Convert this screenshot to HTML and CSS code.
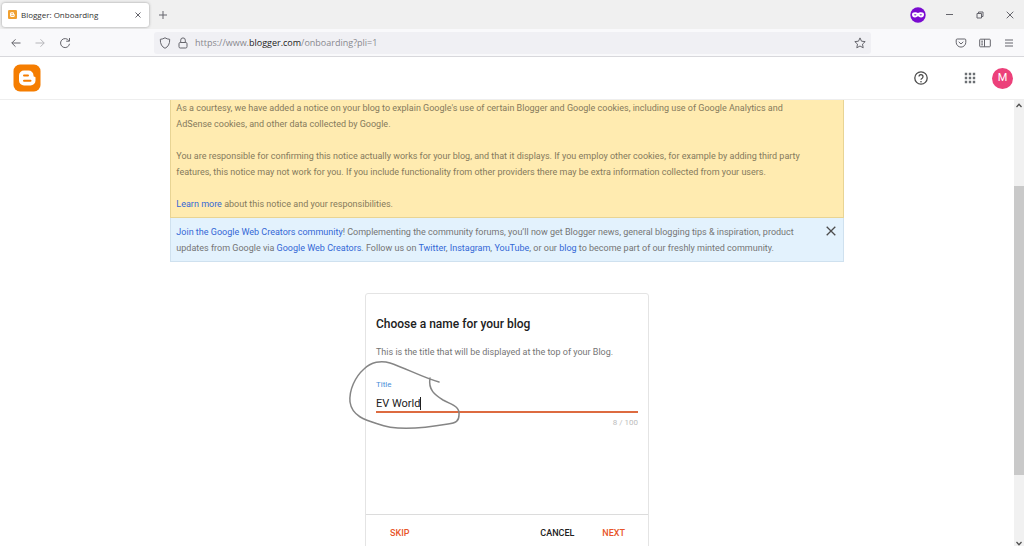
FILE: index.html
```
<!DOCTYPE html>
<html lang="en">
<head>
<meta charset="utf-8">
<title>Blogger: Onboarding</title>
<link rel="stylesheet" href="styles.css">
</head>
<body>
<div class="tabs">
  <div class="tab">
    <svg class="favicon" viewBox="0 0 24 24"><rect width="24" height="24" rx="3" fill="#f0a030"/><path d="M9 6h4a3 3 0 0 1 3 3v1q0 1 1 1t1 1v2.500a4 4 0 0 1-4 4H9.500a4 4 0 0 1-4-4v-5A3.500 3.500 0 0 1 9 6z" fill="#fff"/><path d="M9.500 9.800h3M9.500 14.500h5" stroke="#f0a030" stroke-width="2" stroke-linecap="round"/></svg>
    <span class="tab-title">Blogger: Onboarding</span>
    <button class="icon-btn" aria-label="Close tab"><svg width="6" height="6" viewBox="0 0 6 6"><path d="M.5.5l5 5M5.500.5l-5 5" class="line"/></svg></button>
  </div>
  <button class="icon-btn new-tab" aria-label="New tab"><svg width="8" height="8" viewBox="0 0 8 8"><path d="M4 0v8M0 4h8" class="line"/></svg></button>
  <div class="window-controls">
    <svg width="16" height="16" viewBox="0 0 16 16"><circle cx="8" cy="8" r="7.700" fill="#7a0bd0"/><path d="M5 5.300C6.500 5.300 7 6 8 6s1.500-.7 3-.7c2 0 3 .8 3 2.200 0 1.800-1.200 3-3 3-1.500 0-2-1.300-3-1.300s-1.500 1.300-3 1.300c-1.800 0-3-1.200-3-3 0-1.400 1-2.200 3-2.200z" fill="#fff"/><path d="M3.700 7.800q1.500-1.300 3 0-1.500 1.300-3 0zM9.300 7.800q1.500-1.300 3 0-1.500 1.300-3 0z" fill="#7a0bd0"/></svg>
    <button class="icon-btn" aria-label="Minimize"><svg width="8" height="8" viewBox="0 0 8 8"><path d="M0 3.500h7" class="line"/></svg></button>
    <button class="icon-btn" aria-label="Restore"><svg width="8" height="8" viewBox="0 0 8 8"><path d="M1 2.500h4.500V7H1zM2.500 2.300V1H7v4.500H5.700" class="line"/></svg></button>
    <button class="icon-btn" aria-label="Close window"><svg width="8" height="8" viewBox="0 0 8 8"><path d="M.7.7l6.600 6.600M7.300.7L.7 7.300" class="line"/></svg></button>
  </div>
</div>
<div class="toolbar">
  <div class="nav">
    <button class="icon-btn" aria-label="Back"><svg width="10" height="10" viewBox="0 0 10 10"><path d="M9.500 5H.8M4.500 1.300L.8 5l3.700 3.700" class="line"/></svg></button>
    <button class="icon-btn dim" aria-label="Forward"><svg width="10" height="10" viewBox="0 0 10 10"><path d="M.5 5h8.700M5.500 1.300L9.200 5 5.500 8.700" class="line"/></svg></button>
    <button class="icon-btn" aria-label="Reload"><svg width="12" height="12" viewBox="0 0 12 12"><path d="M9.800 3.600a4.500 4.500 0 1 0 .7 3.200M10.500 1v3.200H7.200" class="line"/></svg></button>
  </div>
  <div class="address">
    <svg width="12" height="12" viewBox="0 0 12 12"><path d="M6 .8c1.400.9 3 1.400 4.700 1.500C10.900 6.800 9 10 6 11.300 3 10 1.100 6.800 1.300 2.300 3 2.200 4.600 1.700 6 .8z" class="line"/></svg>
    <svg width="12" height="12" viewBox="0 0 12 12"><path d="M3.200 5.500h5.600q1.200 0 1.200 1.200v3q0 1.300-1.200 1.300H3.200Q2 11 2 9.700v-3q0-1.200 1.200-1.200zM3.700 5.500V3.200a2.300 2.300 0 0 1 4.600 0v2.300" class="line"/></svg>
    <span class="url">https://www.<b>blogger.com</b>/onboarding?pli=1</span>
    <button class="icon-btn" aria-label="Bookmark this page"><svg width="12" height="12" viewBox="0 0 12 12"><path d="M6 .9l1.500 3.300 3.700.4-2.700 2.500.7 3.700L6 9l-3.200 1.800.7-3.700L.8 4.600l3.700-.4z" class="line"/></svg></button>
  </div>
  <div class="tools">
    <button class="icon-btn" aria-label="Pocket"><svg width="12" height="12" viewBox="0 0 12 12"><path d="M2.200 2h7.600q1 0 1 1v2.300a4.800 4.800 0 0 1-9.600 0V3q0-1 1-1zM3.700 4.800L6 7l2.300-2.200" class="line"/></svg></button>
    <button class="icon-btn" aria-label="Sidebar"><svg width="12" height="12" viewBox="0 0 12 12"><path d="M1.500 2.200h9q.8 0 .8.800v6q0 .8-.8.800h-9Q.7 9.800.7 9V3q0-.8.800-.8zM5.500 2.200v7.600M2.200 4.200H4M2.200 6H4M2.200 7.800H4" class="line"/></svg></button>
    <button class="icon-btn" aria-label="Menu"><svg width="12" height="12" viewBox="0 0 12 12"><path d="M2 3h8M2 6h8M2 9h8" class="line"/></svg></button>
  </div>
</div>
<header class="app-bar">
  <a href="#" aria-label="Blogger home"><svg width="28" height="28" viewBox="0 0 28 28"><rect x=".5" y=".5" width="27" height="27" rx="6.500" fill="#f57d00"/><path d="M11 6.500h4.500a5 5 0 0 1 5 5c0 1 .4 1.300 1 1.300s1 .4 1 1v2.700a5 5 0 0 1-5 5H11a5 5 0 0 1-5-5v-5a5 5 0 0 1 5-5z" fill="#fff"/><path d="M11 11.500h4M11 16.800h6.500" stroke="#f57d00" stroke-width="2" stroke-linecap="round"/></svg></a>
  <div class="account">
    <button class="icon-btn" aria-label="Help"><svg width="14" height="14" viewBox="0 0 14 14"><circle cx="7" cy="7" r="6.200" class="bold-line"/><path d="M5 5.600a2 2 0 1 1 3.200 1.600Q7 7.900 7 8.800" class="bold-line"/><circle cx="7" cy="10.700" r=".8" fill="#444"/></svg></button>
    <button class="icon-btn apps" aria-label="Google apps"><svg width="12" height="12" viewBox="0 0 12 12"><path d="M.8.8h2.400v2.400H.8zM4.800.8h2.400v2.400H4.800zM8.800.8h2.400v2.400H8.800zM.8 4.800h2.400v2.400H.8zM4.800 4.800h2.400v2.400H4.800zM8.800 4.800h2.400v2.400H8.800zM.8 8.800h2.400v2.400H.8zM4.800 8.800h2.400v2.400H4.800zM8.800 8.800h2.400v2.400H8.800z" fill="#6b6f73"/></svg></button>
    <button class="avatar" aria-label="Account">M</button>
  </div>
</header>
<div class="viewport">
  <main class="content">
    <div class="notices">
      <section class="notice cookie">
        <p>As a courtesy, we have added a notice on your blog to explain Google's use of certain Blogger and Google cookies, including use of Google Analytics and<br>AdSense cookies, and other data collected by Google.</p>
        <p>You are responsible for confirming this notice actually works for your blog, and that it displays. If you employ other cookies, for example by adding third party<br>features, this notice may not work for you. If you include functionality from other providers there may be extra information collected from your users.</p>
        <p><a href="#">Learn more</a> about this notice and your responsibilities.</p>
      </section>
      <section class="notice community">
        <p><a href="#">Join the Google Web Creators community</a>! Complementing the community forums, you’ll now get Blogger news, general blogging tips &amp; inspiration, product<br>updates from Google via <a href="#">Google Web Creators</a>. Follow us on <a href="#">Twitter</a>, <a href="#">Instagram</a>, <a href="#">YouTube</a>, or our <a href="#">blog</a> to become part of our freshly minted community.</p>
        <button class="icon-btn" aria-label="Dismiss"><svg width="10" height="10" viewBox="0 0 10 10"><path d="M.7.7l8.600 8.600M9.300.7L.7 9.300" class="bold-line"/></svg></button>
      </section>
    </div>
    <form class="card">
      <div class="card-body">
        <h1>Choose a name for your blog</h1>
        <p class="hint">This is the title that will be displayed at the top of your Blog.</p>
        <label for="title">Title</label>
        <div class="field"><input id="title" type="text" value="EV World"><span class="caret"></span></div>
        <p class="count">8 / 100</p>
      </div>
      <div class="actions">
        <button type="button" class="accent skip">SKIP</button>
        <button type="button">CANCEL</button>
        <button type="button" class="accent">NEXT</button>
      </div>
      <svg class="scribble" width="114" height="72" viewBox="0 0 114 72"><path d="M91 22C76 18 57 8 42 3C33 0 23 2 16 9C7 17 1 30 2 42C4 56 17 60 30 64C45 70 71 69 100 64C108 63 111 61 111 55C112 46 104 45 95 40C87 35 80 30 82 18"/></svg>
    </form>
  </main>
  <div class="scrollbar" aria-hidden="true">
    <svg width="6" height="5" viewBox="0 0 6 5"><path d="M.5 4L3 1.300 5.500 4"/></svg>
    <div class="track"><div class="thumb"></div></div>
    <svg width="6" height="5" viewBox="0 0 6 5"><path d="M.5 1L3 3.700 5.500 1"/></svg>
  </div>
</div>
</body>
</html>
```
FILE: styles.css
```
* { box-sizing: border-box; }
body {
  margin: 0;
  height: 100vh;
  display: flex;
  flex-direction: column;
  overflow: hidden;
  background: #fff;
  color: #757575;
  font: 9px/16px Roboto, "Liberation Sans", sans-serif;
}
svg { display: block; flex: none; overflow: visible; }
p, h1 { margin: 0; }
button { font: inherit; border: 0; background: none; padding: 0; cursor: pointer; }
a { color: #3367d6; text-decoration: none; }
.icon-btn { display: flex; align-items: center; justify-content: center; }
.line { fill: none; stroke: #65656c; stroke-width: 1; stroke-linejoin: round; }
.bold-line { fill: none; stroke: #4c4c4c; stroke-width: 1.3; }
.dim { opacity: .45; }

.tabs {
  flex: none;
  display: flex;
  align-items: center;
  height: 29px;
  padding: 0 10px 0 2px;
  background: #f0f0f0;
  color: #333;
  font-family: "Open Sans", sans-serif;
}
.tab {
  display: flex;
  align-items: center;
  gap: 4px;
  width: 147px;
  height: 24px;
  padding: 0 8px 0 6px;
  background: #fff;
  border-radius: 3px;
  box-shadow: 0 0 3px #999;
}
.favicon { width: 9px; height: 9px; }
.tab-title { flex: 1; white-space: nowrap; font-size: 8px; }
.new-tab { margin-left: 10px; }
.window-controls { margin-left: auto; display: flex; align-items: center; gap: 22px; }
.window-controls > svg { margin-right: -2px; }

.toolbar {
  flex: none;
  display: flex;
  align-items: center;
  height: 28px;
  padding: 0 9px 0 11px;
  background: #f9f9fb;
  border-bottom: 1px solid #d8d8dc;
}
.nav { display: flex; gap: 14px; width: 143px; }
.address {
  flex: 1;
  display: flex;
  align-items: center;
  gap: 6px;
  height: 22px;
  padding: 0 5px;
  background: #f0f0f4;
  border-radius: 3px;
}
.url { flex: 1; color: #88888e; font-family: "Open Sans", sans-serif; font-size: 9px; }
.url b { color: #222; font-weight: 400; }
.tools { display: flex; gap: 12px; margin-left: 84px; }

.app-bar {
  flex: none;
  display: flex;
  align-items: center;
  justify-content: space-between;
  height: 43px;
  padding: 0 11px 0 13px;
  border-bottom: 1px solid #eee;
}
.account { display: flex; align-items: center; }
.apps { margin: 0 16px 0 36px; }
.avatar {
  width: 21px;
  height: 21px;
  border-radius: 50%;
  background: #ec407a;
  color: #fff;
  font-size: 11px;
}

.viewport { flex: 1; min-height: 0; display: flex; overflow: hidden; }
.content { flex: 1; display: flex; flex-direction: column; align-items: center; gap: 31px; }
.notices { width: 66.4%; }
.notice { border: 1px solid #e8d494; padding: 6px 5px 5px; }
.cookie {
  display: grid;
  gap: 16px;
  padding-top: 0;
  border-top: 0;
  background: #ffebb0;
  color: #857a5c;
}
.community {
  display: flex;
  justify-content: space-between;
  align-items: flex-start;
  border-color: #cfe1ef;
  border-top: 0;
  background: #e3f2fd;
}
.notice p { white-space: nowrap; }
.community button { margin: 2px 2px 0 0; }

.card {
  position: relative;
  width: 284px;
  display: flex;
  flex-direction: column;
  border: 1px solid #e4e4e4;
  border-radius: 3px;
}
.card-body { min-height: 220px; padding: 22px 10px; }
h1 { color: #212121; font-size: 12px; line-height: 16px; font-weight: 500; }
.hint { margin-top: 12px; }
label { display: block; margin-top: 17px; color: #4a90d9; font-size: 8px; }
.field { display: flex; align-items: center; height: 20px; padding-top: 3px; border-bottom: 2px solid #dd6b40; }
.field input {
  field-sizing: content;
  padding: 0;
  border: 0;
  outline: 0;
  background: none;
  color: #212121;
  font: 11px/16px Roboto, sans-serif;
}
.caret { width: 1px; height: 13px; background: #212121; }
.count { margin-top: 2px; text-align: right; color: #bdbdbd; font-size: 8px; }
.actions {
  display: flex;
  align-items: center;
  gap: 28px;
  height: 36px;
  padding: 0 23px 0 24px;
  border-top: 1px solid #dcdcdc;
}
.actions button { color: #212121; font-weight: 500; }
.actions .accent { color: #e8562a; }
.skip { margin-right: auto; }
.scribble { position: absolute; left: -18px; top: 66px; pointer-events: none; }
.scribble path { fill: none; stroke: #858585; stroke-width: 1.500; stroke-linecap: round; }

.scrollbar {
  width: 10px;
  display: flex;
  flex-direction: column;
  align-items: center;
  gap: 4px;
  padding: 3px 0 0;
  background: #f1f1f1;
}
.scrollbar path { fill: none; stroke: #505050; stroke-width: 1.300; }
.track { flex: 1; width: 100%; display: flex; flex-direction: column; }
.thumb { height: 68%; margin-top: 74px; background: #c9c9c9; }
```
